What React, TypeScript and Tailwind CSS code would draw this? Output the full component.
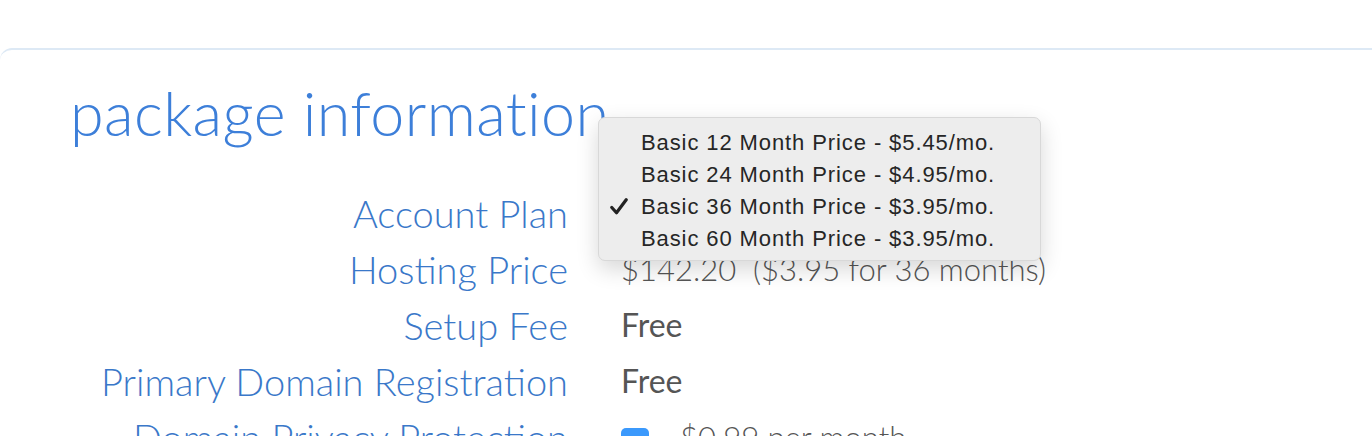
import React from "react";

const rows: { label: string; value: React.ReactNode }[] = [
  { label: "Account Plan", value: <span className="text-[#555]"> </span> },
  {
    label: "Hosting Price",
    value: (
      <span className="font-light text-[#555] text-[31px]">
        $142.20&nbsp;&nbsp;($3.95 for 36 months)
      </span>
    ),
  },
  { label: "Setup Fee", value: <span className="text-[#555] text-[32px]">Free</span> },
  { label: "Primary Domain Registration", value: <span className="text-[#555] text-[32px]">Free</span> },
  {
    label: "Domain Privacy Protection",
    value: (
      <span className="flex items-center gap-[31px]">
        <span className="w-[28px] h-[28px] mt-[10px] rounded-[5px] bg-[#3b99fc] inline-block" />
        <span className="font-light text-[#555] text-[31px]">$0.99 per month</span>
      </span>
    ),
  },
];

const options = [
  "Basic 12 Month Price - $5.45/mo.",
  "Basic 24 Month Price - $4.95/mo.",
  "Basic 36 Month Price - $3.95/mo.",
  "Basic 60 Month Price - $3.95/mo.",
];

export default function App() {
  return (
    <div className="relative w-[1372px] h-[436px] overflow-hidden bg-white" style={{ fontFamily: "Lato, 'Noto Sans', sans-serif" }}>
      <div className="pt-[48px]">
        <div className="border-t-2 border-[#dde9f5] rounded-tl-[12px] mr-[-20px] pl-[70px] h-[400px]">
          <h1 className="text-[#3d7fd9] font-light text-[61px] leading-none mt-[32px] tracking-[0.4px]">
            package information
          </h1>
          <div className="mt-[42px] flex flex-col">
            {rows.map((r) => (
              <div key={r.label} className="flex items-center h-[56px]">
                <div className="w-[498px] shrink-0 text-right text-[#3a78c9] font-light text-[38px] leading-none">
                  {r.label}
                </div>
                <div className="ml-[53px]">{r.value}</div>
              </div>
            ))}
          </div>
        </div>
      </div>

      <div
        className="absolute left-[598px] top-[117px] w-[443px] h-[144px] rounded-[7px] bg-[#ededed] border border-[#d8d8d8] shadow-[0_8px_22px_rgba(0,0,0,0.16)] py-[8px]"
        style={{ fontFamily: "'Liberation Sans', Arial, sans-serif" }}
      >
        {options.map((o, i) => (
          <div key={o} className="relative h-[32px] flex items-center pl-[42px] text-[22px] text-[#262626] tracking-[0.9px]">
            {i === 2 && (
              <svg className="absolute left-[11px] top-[8px]" width="18" height="17" viewBox="0 0 18 17">
                <path d="M1.8 9.5 L6.5 14.8 L16.2 1.8" fill="none" stroke="#222" strokeWidth="3.2" strokeLinecap="round" strokeLinejoin="round" />
              </svg>
            )}
            {o}
          </div>
        ))}
      </div>
    </div>
  );
}
